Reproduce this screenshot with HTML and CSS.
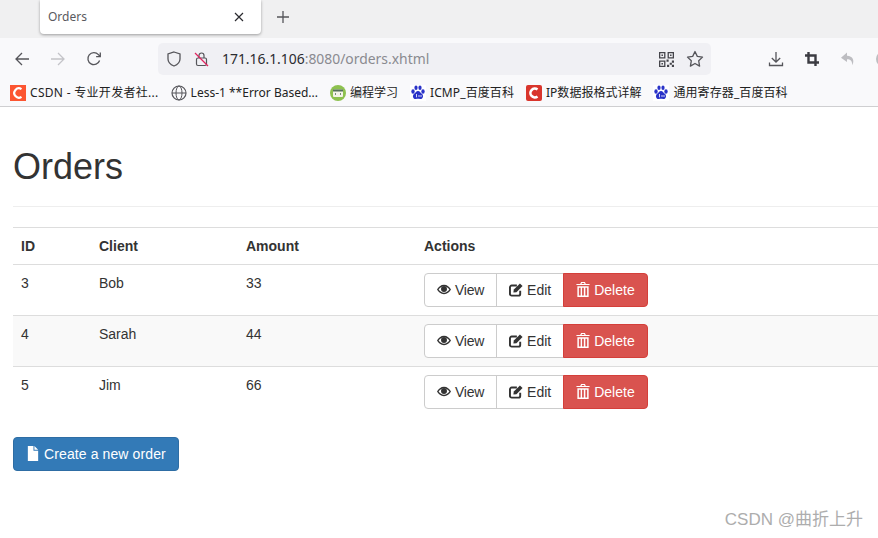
FILE: index.html
```html
<!DOCTYPE html>
<html lang="en">
<head>
<meta charset="utf-8">
<title>Orders</title>
<link rel="stylesheet" href="styles.css">
</head>
<body>
<header class="chrome">
  <div class="tabstrip">
    <div class="tab">
      <span class="tab-title">Orders</span>
      <svg class="tab-close" viewBox="0 0 10 10" width="10" height="10"><path d="M1 1l8 8M9 1l-8 8" stroke="#2b2b30" stroke-width="1.2" fill="none"/></svg>
    </div>
    <svg class="tab-new" viewBox="0 0 12 12" width="12" height="12"><path d="M6 0v12M0 6h12" stroke="#55555a" stroke-width="1.3" fill="none"/></svg>
  </div>
  <div class="toolbar">
    <svg class="nav-icon" viewBox="0 0 16 16" width="16" height="16"><path d="M15 8H2M8 2L2 8l6 6" stroke="#55555a" stroke-width="1.3" fill="none"/></svg>
    <svg class="nav-icon" viewBox="0 0 16 16" width="16" height="16"><path d="M1 8h13M8 2l6 6-6 6" stroke="#c4c4c8" stroke-width="1.3" fill="none"/></svg>
    <svg class="nav-icon" viewBox="0 0 16 16" width="16" height="16"><path d="M13.6 9.5A6 6 0 1 1 12.4 3.6L14 5.4M14.3 1.4v4.2h-4.2" stroke="#55555a" stroke-width="1.3" fill="none"/></svg>
    <div class="urlbar">
      <svg class="url-icon" viewBox="0 0 16 16" width="16" height="16"><path d="M8 1l6 2v5c0 3.500-3 5.800-6 7-3-1.200-6-3.500-6-7V3z" stroke="#55555a" stroke-width="1.300" fill="none"/></svg>
      <svg class="url-icon" viewBox="0 0 16 16" width="16" height="16"><rect x="2.500" y="7" width="10" height="7.500" rx="1.500" stroke="#55555a" stroke-width="1.200" fill="none"/><path d="M5 7V4.500a2.500 2.500 0 0 1 5 0V7" stroke="#55555a" stroke-width="1.200" fill="none"/><path d="M1 2l13 13" stroke="#e0245e" stroke-width="1.200"/></svg>
      <span class="url"><span class="url-host">171.16.1.106</span>:8080/orders.xhtml</span>
      <svg class="url-qr" viewBox="0 0 14 14" width="15" height="15"><path d="M0 0h6v6H0zM1.200 1.200v3.600h3.600V1.200zM8 0h6v6H8zM9.200 1.200v3.600h3.600V1.200zM0 8h6v6H0zM1.200 9.200v3.600h3.600V9.200z" fill="#44444a" fill-rule="evenodd"/><path d="M2.300 2.300h1.400v1.400H2.300zM10.300 2.300h1.400v1.400h-1.400zM2.300 10.300h1.400v1.400H2.300zM7 7h2v2H7zM12 8h2v2h-2zM10 10h2v2h-2zM7.500 12h2v2h-2zM12 12h2v2h-2z" fill="#44444a"/></svg>
      <svg class="url-star" viewBox="0 0 18 18" width="18" height="18"><path d="M9 1.500l2.300 4.900 5.200.7-3.800 3.700.9 5.300L9 13.500l-4.600 2.600.9-5.300L1.500 7.100l5.200-.7z" stroke="#55555a" stroke-width="1.300" fill="none" stroke-linejoin="round"/></svg>
    </div>
    <div class="tools">
      <svg viewBox="0 0 16 16" width="16" height="16"><path d="M8 1v10M3.800 7L8 11l4.200-4M1.500 11.500V14.500h13v-3" stroke="#55555a" stroke-width="1.300" fill="none"/></svg>
      <svg viewBox="0 0 16 16" width="16" height="16"><path d="M4.500 1v10.500H15M1 4.500h10.500V15" stroke="#3c3c42" stroke-width="2.400" fill="none"/></svg>
      <svg viewBox="0 0 16 16" width="16" height="16"><path d="M7 1.500L1 6.800 7 11V8.200c3.500 0 5 1.500 5.500 6 2-5 .5-9-5.500-9.400z" fill="#bdbdc1"/></svg>
      <svg viewBox="0 0 16 16" width="16" height="16"><circle cx="8" cy="8" r="7" stroke="#bdbdc1" stroke-width="2" fill="none"/></svg>
    </div>
  </div>
  <nav class="bookmarks">
    <span class="bookmark bm-wide"><svg class="fav-svg" viewBox="0 0 16 16" width="16" height="16"><rect width="16" height="16" fill="#fc5531"/><path d="M11.500 4.200A4.600 4.600 0 1 0 11.500 11.800" stroke="#fff" stroke-width="2.200" fill="none"/></svg>CSDN - 专业开发者社...</span>
    <span class="bookmark"><svg class="fav-svg" viewBox="0 0 16 16" width="16" height="16"><circle cx="8" cy="8" r="7" stroke="#55555a" stroke-width="1.200" fill="none"/><ellipse cx="8" cy="8" rx="3" ry="7" stroke="#55555a" fill="none"/><path d="M1 8h14" stroke="#55555a"/></svg>Less-1 **Error Based...</span>
    <span class="bookmark"><svg class="fav-svg" viewBox="0 0 16 16" width="16" height="16"><circle cx="8" cy="8" r="8" fill="#8dc14f"/><rect x="3" y="4.500" width="10" height="7.500" rx="1" fill="#f3f3e8"/><rect x="3" y="4.500" width="10" height="2" fill="#55705a"/><path d="M6 8l-1 1 1 1M10 8l1 1-1 1" stroke="#55705a" fill="none" stroke-width=".8"/></svg>编程学习</span>
    <span class="bookmark bm-slight"><svg class="fav-svg" viewBox="0 0 16 16" width="16" height="16"><use href="#paw"/></svg>ICMP_百度百科</span>
    <span class="bookmark"><svg class="fav-svg" viewBox="0 0 16 16" width="16" height="16"><rect width="16" height="16" rx="2" fill="#d9352c"/><path d="M11.500 4.500A4.400 4.400 0 1 0 11.500 11.500" stroke="#fff" stroke-width="2.600" fill="none"/></svg>IP数据报格式详解</span>
    <span class="bookmark bm-slight"><svg class="fav-svg" viewBox="0 0 16 16" width="16" height="16"><defs><g id="paw"><rect width="16" height="16" fill="#fff"/><g fill="#2932c8"><ellipse cx="3" cy="6.500" rx="1.700" ry="2.200"/><ellipse cx="6" cy="2.800" rx="1.600" ry="2.200"/><ellipse cx="10" cy="2.800" rx="1.600" ry="2.200"/><ellipse cx="13" cy="6.500" rx="1.700" ry="2.200"/><path d="M8 6c2 0 2.500 2 4 3 2 1.500 1 5.500-2 5-1-.2-3-.2-4 0-3 .5-4-3.500-2-5 1.500-1 2-3 4-3z"/></g><path d="M6.500 9v3.300M9 10v2M11 10v2" stroke="#fff" stroke-width=".8"/></g></defs><use href="#paw"/></svg>通用寄存器_百度百科</span>
  </nav>
</header>
<main class="page">
  <h1 class="title">Orders</h1>
  <table class="orders">
    <thead>
      <tr><th class="c-id">ID</th><th class="c-client">Client</th><th class="c-amount">Amount</th><th>Actions</th></tr>
    </thead>
    <tbody>
      <tr class="odd">
        <td>3</td><td>Bob</td><td>33</td>
        <td><div class="btn-group">
          <a class="btn btn-view"><svg class="gi" viewBox="0 0 16 16"><use href="#i-eye"/></svg> View</a>
          <a class="btn"><svg class="gi" viewBox="0 0 16 16"><use href="#i-edit"/></svg> Edit</a>
          <a class="btn btn-danger"><svg class="gi" viewBox="0 0 14 16"><use href="#i-trash"/></svg> Delete</a>
        </div></td>
      </tr>
      <tr class="even">
        <td>4</td><td>Sarah</td><td>44</td>
        <td><div class="btn-group">
          <a class="btn btn-view"><svg class="gi" viewBox="0 0 16 16"><use href="#i-eye"/></svg> View</a>
          <a class="btn"><svg class="gi" viewBox="0 0 16 16"><use href="#i-edit"/></svg> Edit</a>
          <a class="btn btn-danger"><svg class="gi" viewBox="0 0 14 16"><use href="#i-trash"/></svg> Delete</a>
        </div></td>
      </tr>
      <tr class="odd">
        <td>5</td><td>Jim</td><td>66</td>
        <td><div class="btn-group">
          <a class="btn btn-view"><svg class="gi" viewBox="0 0 16 16"><use href="#i-eye"/></svg> View</a>
          <a class="btn"><svg class="gi" viewBox="0 0 16 16"><use href="#i-edit"/></svg> Edit</a>
          <a class="btn btn-danger"><svg class="gi" viewBox="0 0 14 16"><use href="#i-trash"/></svg> Delete</a>
        </div></td>
      </tr>
    </tbody>
  </table>
  <a class="btn btn-primary"><svg class="gi" viewBox="3 0 11 16"><path d="M3 0h6v5h5v11H3zM10 0l4 4h-4z" fill="currentColor"/></svg> Create a new order</a>
</main>
<div class="watermark">CSDN @曲折上升</div>
<svg class="sprites" width="0" height="0" aria-hidden="true">
  <defs>
    <g id="i-eye"><path fill="currentColor" fill-rule="evenodd" d="M8 2.500c3.500 0 6.500 2.400 8 5.500-1.500 3-4.500 5.300-8 5.300S1.500 11 0 8c1.500-3.100 4.500-5.500 8-5.500zM8 4.200C5.600 4.200 3.300 5.800 1.800 8c1.500 2.100 3.800 3.600 6.200 3.600S12.700 10.100 14.200 8C12.700 5.800 10.400 4.200 8 4.200z"/><circle cx="8" cy="7.500" r="3.400" fill="currentColor"/></g>
    <g id="i-edit"><path fill="none" stroke="currentColor" stroke-width="2.200" d="M12.800 9.500V13a2 2 0 0 1-2 2H3.100a2 2 0 0 1-2-2V5.500a2 2 0 0 1 2-2H9"/><path fill="currentColor" d="M5.500 8l7-7 3 3-7 7-3.500.5z"/></g>
    <g id="i-trash"><path fill="currentColor" fill-rule="evenodd" d="M5 0h4l1 2h4v1.300H0V2h4zM5.800 1L5.500 2h3l-.3-1zM1 4.500h12V16H1zM2.600 6v8.500h1.900V6zM6 6v8.500h1.900V6zM9.500 6v8.500h1.900V6z"/></g>
  </defs>
</svg>
</body>
</html>
```
FILE: styles.css
```css
* { box-sizing: border-box; }
html, body { margin: 0; height: 100%; }
body {
  width: 878px;
  height: 538px;
  overflow: hidden;
  position: relative;
  background: #fff;
  color: #333;
  font-family: "Liberation Sans", Arial, sans-serif;
  font-size: 14px;
  line-height: 20px;
}
.sprites { position: absolute; }
.chrome { height: 107px; border-bottom: 1px solid #cfcfd1; background: #f9f9fb; font-family: "Noto Sans", "Noto Sans CJK SC", sans-serif; overflow: hidden; }
.tabstrip {
  height: 38px;
  background: #f0f0f1;
  display: flex;
  align-items: flex-start;
  padding-left: 40px;
}
.tab {
  width: 221px;
  height: 34px;
  background: #fff;
  border-radius: 0 0 4px 4px;
  box-shadow: 0 1px 3px rgba(0,0,0,.35);
  display: flex;
  align-items: center;
  justify-content: space-between;
  padding: 0 17px 0 8px;
}
.tab-title { font-size: 12px; color: #5a5a60; }
.tab-new { margin: 11px 0 0 16px; }
.toolbar {
  height: 42px;
  display: flex;
  align-items: center;
  padding-left: 14px;
  gap: 20px;
}
.toolbar svg { flex: none; }
.urlbar {
  width: 553px;
  flex: none;
  height: 32px;
  margin-left: 36px;
  border-radius: 5px;
  background: #f0f0f4;
  display: flex;
  align-items: center;
  padding: 0 7px 0 8px;
  gap: 12px;
}
.url { flex: 1; font-size: 13.900px; color: #8a8a90; white-space: nowrap; }
.url-host { color: #2b2b30; }
.tools { display: flex; flex: none; align-items: center; gap: 20px; margin-left: 37px; }
.bookmarks {
  height: 26px;
  display: flex;
  align-items: center;
  gap: 12px;
  padding-left: 10px;
  font-size: 12px;
  color: #222;
  white-space: nowrap;
}
.bookmark { display: flex; align-items: center; gap: 4px; }
.bm-wide { letter-spacing: .3px; }
.bm-slight { letter-spacing: .1px; }
.fav-svg { flex: none; }

.page { padding: 0 0 0 13px; width: 1000px; }
.title {
  margin: 40px 0 20px;
  padding-bottom: 19px;
  width: 987px;
  border-bottom: 1px solid #eee;
  font-size: 36px;
  font-weight: 500;
  line-height: 39.600px;
  color: #333;
}
.orders {
  width: 987px;
  border-collapse: collapse;
  margin-bottom: 20px;
  table-layout: fixed;
}
.orders th, .orders td {
  padding: 8px;
  text-align: left;
  vertical-align: top;
  line-height: 20px;
  border-top: 1px solid #ddd;
}
.orders thead th { border-bottom: 1px solid #ddd; vertical-align: bottom; }
.orders tbody tr:first-child td { border-top: 0; }
.even { background: #f9f9f9; }
.c-id { width: 78px; }
.c-client { width: 147px; }
.c-amount { width: 178px; }
.btn-group { display: flex; }
.btn {
  display: inline-flex;
  align-items: center;
  gap: 4px;
  height: 34px;
  padding: 6px 12px;
  border: 1px solid #ccc;
  background: #fff;
  color: #333;
  font-size: 14px;
  line-height: 20px;
  white-space: nowrap;
}
.btn-group .btn + .btn { margin-left: -1px; }
.btn-group .btn:first-child { border-radius: 4px 0 0 4px; }
.btn-group .btn:last-child { border-radius: 0 4px 4px 0; }
.btn-view { letter-spacing: -.25px; }
.btn-danger { background: #d9534f; border-color: #d43f3a; color: #fff; }
.btn-primary { background: #337ab7; border-color: #2e6da4; color: #fff; border-radius: 4px; letter-spacing: .11px; }
.gi { flex: none; width: 14px; height: 15px; overflow: visible; }
.watermark {
  position: absolute;
  right: 15px;
  top: 509px;
  font-size: 17px;
  line-height: 22px;
  color: #adadad;
  font-family: "Liberation Sans", "Noto Sans CJK SC", sans-serif;
}
```
